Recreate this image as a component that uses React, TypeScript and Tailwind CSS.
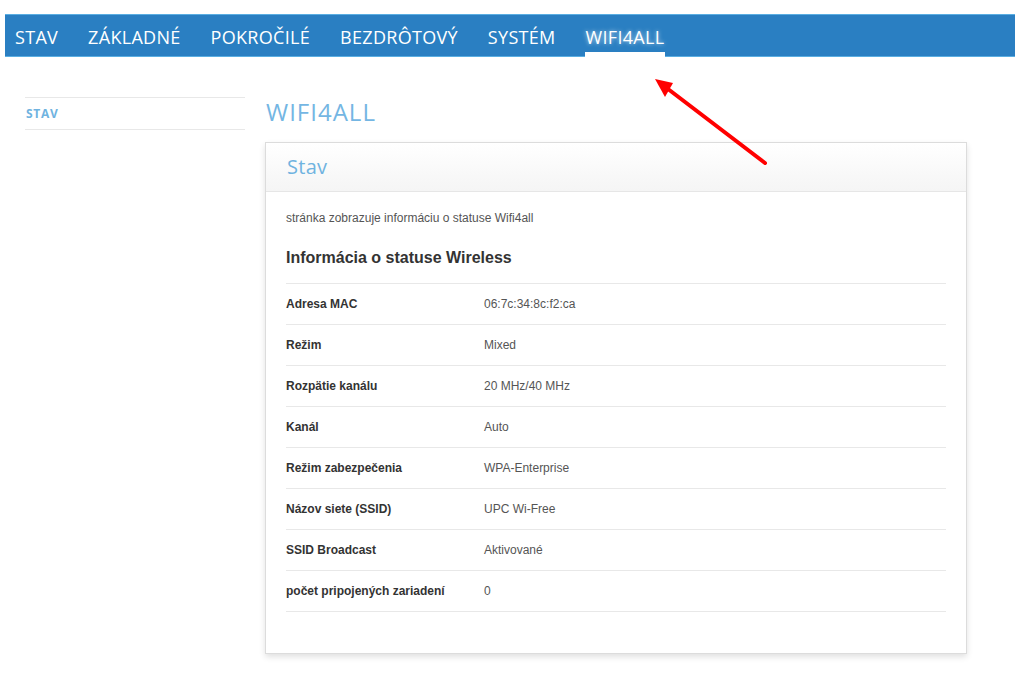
import React from "react";

const navItems = ["STAV", "ZÁKLADNÉ", "POKROČILÉ", "BEZDRÔTOVÝ", "SYSTÉM", "WIFI4ALL"];

const rows: [string, string][] = [
  ["Adresa MAC", "06:7c:34:8c:f2:ca"],
  ["Režim", "Mixed"],
  ["Rozpätie kanálu", "20 MHz/40 MHz"],
  ["Kanál", "Auto"],
  ["Režim zabezpečenia", "WPA-Enterprise"],
  ["Názov siete (SSID)", "UPC Wi-Free"],
  ["SSID Broadcast", "Aktivované"],
  ["počet pripojených zariadení", "0"],
];

const din = { fontFamily: '"Open Sans", "DejaVu Sans", sans-serif' };

export default function App() {
  return (
    <div className="relative w-[1020px] h-[682px] bg-white overflow-hidden" style={{ fontFamily: '"Liberation Sans", Arial, sans-serif' }}>
      <div className="pt-[14px] px-[5px]">
        <nav className="h-[43px] bg-[#2a7fc2] border-t border-b border-[#5aaee2] flex items-stretch pl-[10px] gap-[30px]" style={din}>
          {navItems.map((n) => (
            <div key={n} className="relative flex items-center text-white text-[18px] tracking-[0.3px] leading-none pt-[2px]">
              <span className={n === "WIFI4ALL" ? "[text-shadow:0_0_4px_rgba(255,255,255,0.7)]" : ""}>{n}</span>
              {n === "WIFI4ALL" && (
                <div className="absolute left-[-1px] right-[-1px] bottom-[-1px] h-[5px] bg-white" />
              )}
            </div>
          ))}
        </nav>
      </div>

      <div className="flex pl-[25px] pt-[40px]">
        <aside className="w-[220px]">
          <div className="border-t border-b border-[#e8e8e8] h-[33px] flex items-center">
            <span className="text-[12px] font-bold text-[#6fb3e0] tracking-[0.7px] pl-[1px]" style={din}>STAV</span>
          </div>
        </aside>

        <main className="ml-[20px] w-[702px]">
          <h1 className="text-[24px] text-[#74b6e3] leading-none pt-[3px] pl-[1px] tracking-[1px]" style={din}>WIFI4ALL</h1>
          <div className="mt-[18px] border border-[#dcdcdc] shadow-[0_3px_6px_rgba(0,0,0,0.12)] bg-white">
            <div className="h-[49px] bg-gradient-to-b from-white to-[#f5f5f5] border-b border-[#e6e6e6] flex items-center pl-[21px]">
              <span className="text-[20px] text-[#6fb3e0] leading-none tracking-[0.3px]" style={din}>Stav</span>
            </div>
            <div className="px-[20px] pt-[18px] pb-[41px]">
              <p className="text-[12px] text-[#555] leading-[16px]">stránka zobrazuje informáciu o statuse Wifi4all</p>
              <h2 className="mt-[22px] text-[16px] font-bold text-[#333] leading-[20px]">Informácia o statuse Wireless</h2>
              <div className="mt-[15px] border-t border-[#e8e8e8]">
                {rows.map(([k, v]) => (
                  <div key={k} className="h-[41px] border-b border-[#e8e8e8] flex items-center text-[12px]">
                    <div className="w-[198px] font-bold text-[#333]">{k}</div>
                    <div className="text-[#555]">{v}</div>
                  </div>
                ))}
              </div>
            </div>
          </div>
        </main>
      </div>

      <svg className="absolute left-0 top-0 pointer-events-none" width="1020" height="682">
        <line x1="765" y1="163" x2="668" y2="89" stroke="#ff0000" strokeWidth="4" strokeLinecap="round" />
        <polygon points="655,79 673,83 665,97" fill="#ff0000" />
      </svg>
    </div>
  );
}
